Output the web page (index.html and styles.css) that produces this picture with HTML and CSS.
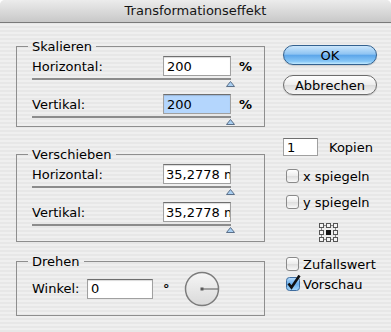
FILE: index.html
```
<html lang="de">
<head>
    <meta charset="UTF-8">
    <title>Transformationseffekt</title>
    <link rel="stylesheet" href="styles.css">
</head>
<body>
    <div class="window">
        <div class="titlebar">Transformationseffekt</div>
        <div class="main">
            <div class="groups">
                <div class="group scale">
                    <span class="group-title">Skalieren</span>
                    <div class="field">
                        <label>Horizontal:</label>
                        <input class="num" value="200">
                        <span class="unit">%</span>
                    </div>
                    <div class="slider"><svg class="thumb" width="9" height="6"><path d="M4.5 0.5 L8.5 5.5 H0.5 Z" fill="#a9cff2" stroke="#5b6f88"/></svg></div>
                    <div class="field">
                        <label>Vertikal:</label>
                        <input class="num selected" value="200">
                        <span class="unit">%</span>
                    </div>
                    <div class="slider"><svg class="thumb" width="9" height="6"><path d="M4.5 0.5 L8.5 5.5 H0.5 Z" fill="#a9cff2" stroke="#5b6f88"/></svg></div>
                </div>

                <div class="group move">
                    <span class="group-title">Verschieben</span>
                    <div class="field">
                        <label>Horizontal:</label>
                        <input class="num tight" value="35,2778 mm">
                        <span class="unit"></span>
                    </div>
                    <div class="slider"><svg class="thumb" width="9" height="6"><path d="M4.5 0.5 L8.5 5.5 H0.5 Z" fill="#a9cff2" stroke="#5b6f88"/></svg></div>
                    <div class="field">
                        <label>Vertikal:</label>
                        <input class="num tight" value="35,2778 mm">
                        <span class="unit"></span>
                    </div>
                    <div class="slider"><svg class="thumb" width="9" height="6"><path d="M4.5 0.5 L8.5 5.5 H0.5 Z" fill="#a9cff2" stroke="#5b6f88"/></svg></div>
                </div>

                <div class="group rotate">
                    <span class="group-title">Drehen</span>
                    <div class="dial-row">
                        <label>Winkel:</label>
                        <input class="num angle" value="0">
                        <span class="deg">°</span>
                        <svg class="dial" width="36" height="36" viewBox="0 0 36 36">
                            <defs>
                                <linearGradient id="dialfill" x1="0" y1="0" x2="0" y2="1">
                                    <stop offset="0" stop-color="#f6f6f6"/>
                                    <stop offset="1" stop-color="#d9d9d9"/>
                                </linearGradient>
                            </defs>
                            <circle cx="18" cy="18" r="16.5" fill="url(#dialfill)" stroke="#7c7c7c" stroke-width="1.5"/>
                            <line x1="18" y1="18" x2="34" y2="18" stroke="#5a5a5a" stroke-width="1"/>
                            <rect x="16.5" y="16.5" width="3" height="3" fill="#5a5a5a"/>
                        </svg>
                    </div>
                </div>
            </div>

            <div class="side">
                <button class="btn default">OK</button>
                <button class="btn">Abbrechen</button>
                <div class="copies">
                    <input class="count" value="1">
                    <span>Kopien</span>
                </div>
                <label class="check flip-x"><span class="box"></span>x spiegeln</label>
                <label class="check flip-y"><span class="box"></span>y spiegeln</label>
                <svg class="refpoint" width="19" height="19" viewBox="0 0 19 19">
                    <g stroke="#8a8a8a" stroke-width="1">
                        <line x1="2.5" y1="2.5" x2="16.5" y2="2.5"/>
                        <line x1="2.5" y1="16.5" x2="16.5" y2="16.5"/>
                        <line x1="2.5" y1="2.5" x2="2.5" y2="16.5"/>
                        <line x1="16.5" y1="2.5" x2="16.5" y2="16.5"/>
                    </g>
                    <g fill="#f4f4f4" stroke="#555" stroke-width="1">
                        <rect x="0.5" y="0.5" width="4" height="4"/>
                        <rect x="7.5" y="0.5" width="4" height="4"/>
                        <rect x="14.5" y="0.5" width="4" height="4"/>
                        <rect x="0.5" y="7.5" width="4" height="4"/>
                        <rect x="14.5" y="7.5" width="4" height="4"/>
                        <rect x="0.5" y="14.5" width="4" height="4"/>
                        <rect x="7.5" y="14.5" width="4" height="4"/>
                        <rect x="14.5" y="14.5" width="4" height="4"/>
                    </g>
                    <rect x="7" y="7" width="5" height="5" fill="#111"/>
                </svg>
                <label class="check random"><span class="box"></span>Zufallswert</label>
                <label class="check preview">
                    <svg class="box-on" width="15" height="16" viewBox="0 0 15 16">
                        <defs>
                            <linearGradient id="boxblue" x1="0" y1="0" x2="0" y2="1">
                                <stop offset="0" stop-color="#b8dcfb"/>
                                <stop offset="0.5" stop-color="#6aaeea"/>
                                <stop offset="1" stop-color="#a7d8fb"/>
                            </linearGradient>
                        </defs>
                        <rect x="0.5" y="2.5" width="13" height="13" rx="3" fill="url(#boxblue)" stroke="#3f6c9e"/>
                        <path d="M2.5 8.5 L5.5 12.5 L13.5 0.5" fill="none" stroke="#111" stroke-width="2.6"/>
                    </svg>Vorschau</label>
            </div>
        </div>
    </div>
</body>
</html>
```

FILE: styles.css
```
body {
    margin: 0;
    background: #ffffff;
    font-family: "DejaVu Sans", sans-serif;
    font-size: 13px;
    color: #000;
}
.window {
    width: 391px;
    height: 332px;
    overflow: hidden;
    border-radius: 5px 5px 0 0;
    background: repeating-linear-gradient(#efefef 0 2px, #e7e7e7 2px 4px) fixed;
}
.titlebar {
    height: 22px;
    line-height: 22px;
    text-align: center;
    color: #141414;
    background: linear-gradient(#ececec, #c8c8c8);
    border-bottom: 1px solid #7a7a7a;
}
.main {
    display: flex;
    padding-left: 16px;
}

/* left column: group boxes */
.groups {
    width: 249px;
    padding-top: 23px;
}
.group {
    position: relative;
    border: 1px solid #8e8e8e;
    padding: 9px 15px 1px 15px;
}
.group-title {
    position: absolute;
    top: -8px;
    left: 11px;
    padding: 0 4px;
    line-height: 15px;
    background: repeating-linear-gradient(#efefef 0 2px, #e7e7e7 2px 4px) fixed;
}
.move {
    margin-top: 27px;
    padding-bottom: 8px;
}
.rotate {
    margin-top: 19px;
    padding-bottom: 9px;
}
.field {
    display: flex;
    align-items: center;
    height: 20px;
}
.field label {
    flex: 1;
}
.num {
    width: 68px;
    height: 20px;
    box-sizing: border-box;
    padding: 0 3px;
    border: 1px solid #a0a0a0;
    border-top-color: #6f6f6f;
    box-shadow: inset 0 1px 1px rgba(0, 0, 0, 0.15);
    background: #fff;
    font-family: "DejaVu Sans", sans-serif;
    font-size: 13px;
    color: #000;
    outline: none;
}
.num.tight {
    padding: 0 0 0 2px;
}
.num.selected {
    background: #b4d6fd;
}
.unit {
    width: 10px;
    margin-left: 8px;
    font-weight: bold;
}
.slider {
    position: relative;
    height: 7px;
    margin: 2px 18px 0 0;
    border-top: 2px solid #8c8c8c;
}
.slider + .field {
    margin-top: 7px;
}
.thumb {
    position: absolute;
    right: -4px;
    top: 1px;
}
.dial-row {
    display: flex;
    align-items: center;
    height: 35px;
}
.dial-row label {
    width: 55px;
}
.num.angle {
    width: 66px;
}
.deg {
    margin-left: 10px;
    font-weight: bold;
}
.dial {
    margin-left: 14px;
}

/* right column */
.side {
    width: 94px;
    margin-left: 18px;
    padding-top: 22px;
    display: flex;
    flex-direction: column;
    align-items: flex-start;
}
.btn {
    width: 94px;
    height: 20px;
    padding: 0;
    border: 1px solid #6c6c6c;
    border-radius: 10px;
    font-family: "DejaVu Sans", sans-serif;
    font-size: 13px;
    color: #000;
    background: linear-gradient(#fefefe, #ececec 50%, #dcdcdc 52%, #f7f7f7);
    box-shadow: 0 1px 1px rgba(0, 0, 0, 0.15);
}
.btn.default {
    border-color: #33618f;
    background: linear-gradient(#cbe6fc, #8fc4f2 45%, #5da6ea 52%, #86c6f6 85%, #c2eaff);
}
.btn + .btn {
    margin-top: 10px;
}
.copies {
    display: flex;
    align-items: center;
    margin-top: 43px;
    height: 18px;
}
.count {
    width: 35px;
    height: 18px;
    box-sizing: border-box;
    padding: 0 3px;
    border: 1px solid #a0a0a0;
    border-top-color: #6f6f6f;
    background: #fff;
    font-family: "DejaVu Sans", sans-serif;
    font-size: 13px;
    outline: none;
}
.copies span {
    margin-left: 11px;
}
.check {
    display: flex;
    align-items: center;
    height: 14px;
    padding-left: 3px;
}
.box {
    width: 13px;
    height: 14px;
    box-sizing: border-box;
    margin-right: 4px;
    border: 1px solid #8a8a8a;
    border-radius: 3px;
    background: linear-gradient(#ffffff, #ececec 50%, #dedede 52%, #f8f8f8);
}
.box-on {
    margin: -2px 2px 0 0;
}
.flip-x {
    margin-top: 13px;
}
.flip-y {
    margin-top: 12px;
}
.refpoint {
    margin: 14px 0 0 36px;
}
.random {
    margin-top: 15px;
}
.preview {
    margin-top: 6px;
}
```
